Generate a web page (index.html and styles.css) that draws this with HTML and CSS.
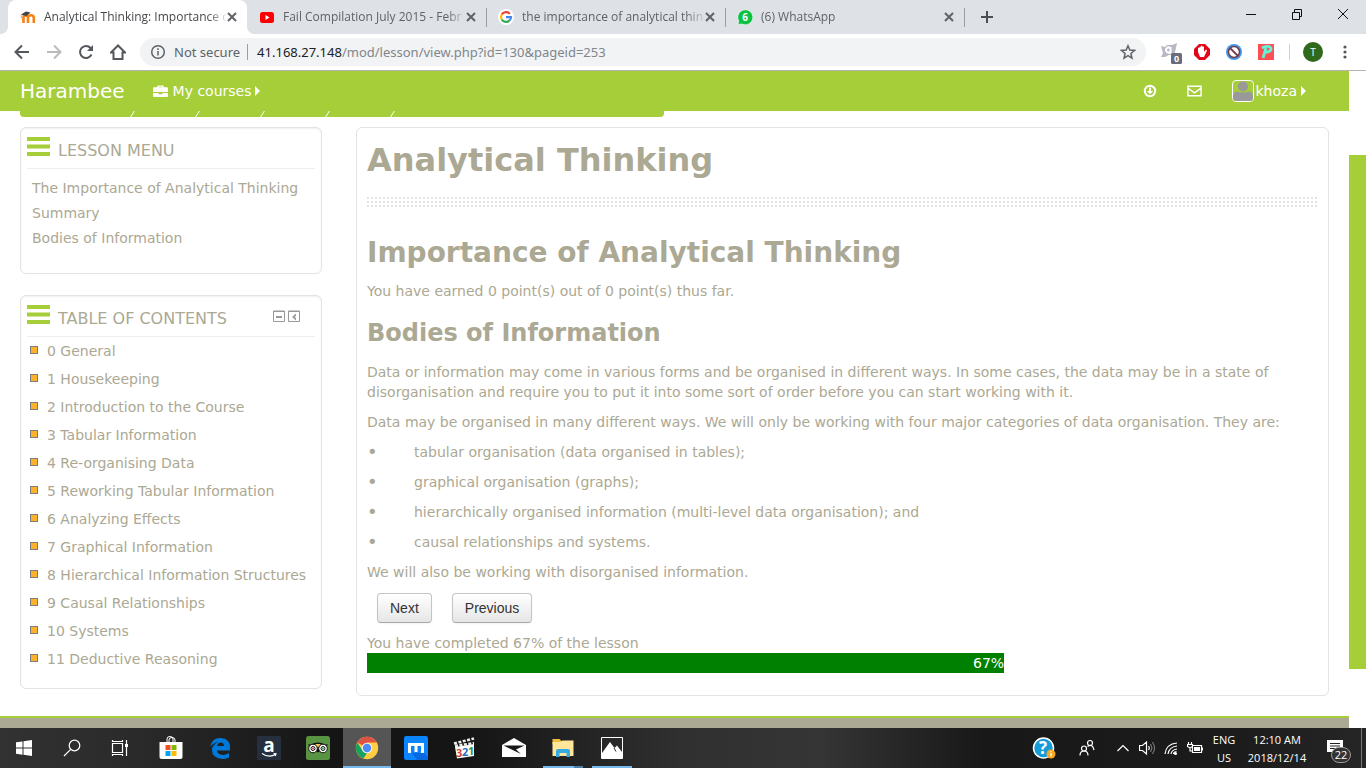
FILE: index.html
```html
<!DOCTYPE html>
<html lang="en">
<head>
<meta charset="utf-8">
<title>Analytical Thinking: Importance of Analytical Thinking</title>
<link rel="stylesheet" href="styles.css">
</head>
<body>
<header class="browser">
  <div class="tabstrip">
    <div class="tab tab-active">
      <svg class="favicon" viewBox="0 0 16 16"><path d="M3.500 14V8.600c0-3 4.500-3 4.500 0V14M8 8.600c0-3.200 5.800-3.200 5.800 0V14" fill="none" stroke="#f98012" stroke-width="2.600"/><path d="M1 5.500 6 2.500l4.500 1-4 3.500z" fill="#444"/><path d="M1.300 5.500v4" stroke="#888" stroke-width=".6"/></svg>
      <span class="tab-title">Analytical Thinking: Importance o</span>
      <button class="tab-close" aria-label="Close tab"><svg viewBox="0 0 10 10"><path d="M1 1l8 8M9 1L1 9"/></svg></button>
    </div>
    <div class="tab">
      <svg class="favicon" viewBox="0 0 16 16"><rect x="1" y="3" width="14" height="11" rx="2.500" fill="#f00"/><path d="M6.500 6v5l4-2.500z" fill="#fff"/></svg>
      <span class="tab-title">Fail Compilation July 2015 - Febr</span>
      <button class="tab-close" aria-label="Close tab"><svg viewBox="0 0 10 10"><path d="M1 1l8 8M9 1L1 9"/></svg></button>
    </div>
    <div class="tab">
      <svg class="favicon" viewBox="0 0 16 16"><circle cx="8" cy="8" r="8" fill="#fff"/><g fill="none" stroke-width="2.200"><path d="M11.800 4.800A5 5 0 0 0 3.700 5.500" stroke="#ea4335"/><path d="M3.700 5.500a5 5 0 0 0 0 5" stroke="#fbbc05"/><path d="M3.700 10.500a5 5 0 0 0 7.800 1" stroke="#34a853"/><path d="M11.500 11.500A5 5 0 0 0 13 8.200H8" stroke="#4285f4"/></g></svg>
      <span class="tab-title">the importance of analytical think</span>
      <button class="tab-close" aria-label="Close tab"><svg viewBox="0 0 10 10"><path d="M1 1l8 8M9 1L1 9"/></svg></button>
    </div>
    <div class="tab">
      <svg class="favicon" viewBox="0 0 16 16"><path d="M1 15.500 1.800 12A7.500 7.500 0 1 1 5 15z" fill="#0dc143" stroke="#fff" stroke-width=".6"/><text x="8" y="12" class="badge-six">6</text></svg>
      <span class="tab-title">(6) WhatsApp</span>
      <button class="tab-close" aria-label="Close tab"><svg viewBox="0 0 10 10"><path d="M1 1l8 8M9 1L1 9"/></svg></button>
    </div>
    <button class="new-tab" aria-label="New tab"><svg viewBox="0 0 12 12"><path d="M6 0v12M0 6h12"/></svg></button>
    <div class="window-controls">
      <button aria-label="Minimize"><svg viewBox="0 0 12 12"><path d="M1 6.500h10"/></svg></button>
      <button aria-label="Restore"><svg viewBox="0 0 12 12"><path d="M1.500 4.500h7v7h-7zM3.500 4.500v-3h7v7h-2"/></svg></button>
      <button aria-label="Close"><svg viewBox="0 0 12 12"><path d="M1 1l10 10M11 1L1 11"/></svg></button>
    </div>
  </div>
  <div class="toolbar">
    <div class="tool-group">
      <button aria-label="Back"><svg viewBox="0 0 16 16"><path d="M15 8H2M8 1.500 1.500 8 8 14.500"/></svg></button>
      <button class="disabled" aria-label="Forward"><svg viewBox="0 0 16 16"><path d="M1 8h13M8 1.500 14.500 8 8 14.500"/></svg></button>
      <button aria-label="Reload"><svg viewBox="0 0 16 16"><path d="M13.500 10.500A6 6 0 1 1 12.500 4L14 5.500"/><path d="M15 1v6H9z" class="solid"/></svg></button>
      <button aria-label="Home"><svg viewBox="0 0 16 16"><path d="M1 8.500 8 1.500l7 7h-2.500V15h-9V8.500z"/></svg></button>
    </div>
    <div class="omnibox">
      <svg class="info" viewBox="0 0 16 16"><circle cx="8" cy="8" r="6.300"/><path d="M8 7v4.500M8 4.300v1.600"/></svg>
      <span class="secure">Not secure</span>
      <div class="url" role="textbox" aria-label="Address"><b>41.168.27.148</b>/mod/lesson/view.php?id=130&amp;pageid=253</div>
      <button class="star" aria-label="Bookmark"><svg viewBox="0 0 16 16"><path d="M8 1.800l1.800 4.300 4.700.4-3.600 3 1.100 4.600L8 11.700l-4 2.400 1.100-4.600-3.600-3 4.700-.4z"/></svg></button>
    </div>
    <div class="tool-group">
      <button aria-label="Extension" class="ext"><svg viewBox="0 0 24 24"><path d="M3 6l4 1 2-2h5l5-2-1 5-1 4v3h-6l-4 2H3l2-4z" fill="#b9b9c6"/><path d="M12 8a2.500 2.500 0 1 0 0 4M12.500 7v7" fill="none" stroke="#fff"/><rect x="13" y="13" width="11" height="11" rx="1.500" fill="#6b6c7b"/><text x="18.500" y="22" class="ext-zero">0</text></svg></button>
      <button aria-label="Blocker" class="ext"><svg viewBox="0 0 24 24"><path d="M9 4h6l5 5v6l-5 5H9l-5-5V9z" fill="#e2061a"/><path d="M8 12V8q1-1 1.500 0V7q1-1 1.500 0V6q1-1 1.500 0v1q1-1 1.500 0v5l1.500-2q1.500-.5 1.500.5L14 17H10z" fill="#fff"/></svg></button>
      <button aria-label="Block content" class="ext"><svg viewBox="0 0 24 24"><circle cx="12" cy="12" r="8" fill="#4099f0"/><circle cx="12" cy="12" r="5.500" fill="#fff" stroke="#743b46" stroke-width="1.500"/><path d="M8 8l8 8" stroke="#743b46" stroke-width="1.800"/></svg></button>
      <button aria-label="P extension" class="ext"><svg viewBox="0 0 24 24"><path d="M4 4h16v16H4z" fill="#ff4f55"/><path d="M9 18l3-10M8 8q3-2 7-1.500 3 1 1.500 4-2 2-6 2" fill="none" stroke="#65f3d5" stroke-width="2.800"/></svg></button>
      <span class="tool-divider"></span>
      <button class="profile" aria-label="Profile"><span>T</span></button>
      <button aria-label="Menu"><svg viewBox="0 0 16 16"><g class="solid"><circle cx="8" cy="3" r="1.600"/><circle cx="8" cy="8" r="1.600"/><circle cx="8" cy="13" r="1.600"/></g></svg></button>
    </div>
  </div>
</header>

<div class="viewport">
  <div class="page">
    <nav class="navbar">
      <a class="brand" href="#">Harambee</a>
      <a class="nav-link" href="#"><svg class="briefcase" viewBox="0 0 16 14"><path d="M0 3.500Q0 2.500 1 2.500H4.500V1.500Q4.500.5 5.500.5h5Q11.500.5 11.500 1.500v1H15q1 0 1 1V7.500H0zM6 2v.5h4V2zM0 8.500h6v1.500h4V8.500h6V12q0 1-1 1H1q-1 0-1-1z"/></svg>My courses<svg class="caret" viewBox="0 0 6 10"><path d="M0 0l5 5-5 5z"/></svg></a>
      <div class="nav-right">
        <a href="#" aria-label="Updates"><svg class="nav-icon" viewBox="0 0 14 14"><circle cx="7" cy="7" r="5.200" fill="none" stroke="#fff" stroke-width="2"/><path d="M6 3.500h2V7h2.200L7 10.300 3.800 7H6z"/></svg></a>
        <a href="#" aria-label="Messages"><svg class="mail" viewBox="0 0 16 12"><path d="M1 1h14v10H1zM1 3l7 5 7-5" fill="none" stroke="#fff" stroke-width="1.500"/></svg></a>
        <a class="user" href="#"><svg class="avatar" viewBox="0 0 20 20"><circle cx="10" cy="5.500" r="5"/><path d="M0 20v-5q0-4 4-4.500 6 2 12 0 4 .5 4 4.500v5z"/></svg>khoza<svg class="caret" viewBox="0 0 6 10"><path d="M0 0l5 5-5 5z"/></svg></a>
      </div>
    </nav>
    <div class="breadcrumb"><i></i><i></i><i></i><i></i><i></i></div>
    <div class="columns">
      <aside class="sidebar">
        <section class="card block">
          <div class="block-head"><svg class="bars" viewBox="0 0 23 19"><path d="M0 2h23M0 9.500h23M0 17h23"/></svg><h2>LESSON MENU</h2></div>
          <ul class="menu">
            <li><a href="#">The Importance of Analytical Thinking</a></li>
            <li><a href="#">Summary</a></li>
            <li><a href="#">Bodies of Information</a></li>
          </ul>
        </section>
        <section class="card block">
          <div class="block-head"><svg class="bars" viewBox="0 0 23 19"><path d="M0 2h23M0 9.500h23M0 17h23"/></svg><h2>TABLE OF CONTENTS</h2>
            <div class="block-actions">
              <button aria-label="Hide block"><svg viewBox="0 0 12 12"><path d="M.5 1h11v10.500H.5zM0 1.500h12" fill="none" stroke="#999"/><path d="M3 6h6v2H3z" fill="#999"/></svg></button>
              <button aria-label="Dock block"><svg viewBox="0 0 12 12"><path d="M.5 1h11v10.500H.5zM0 1.500h12" fill="none" stroke="#999"/><path d="M8 3.500 4 7l4 3.500V8L6.500 7 8 6z" fill="#999"/></svg></button>
            </div>
          </div>
          <ul class="toc">
            <li><a href="#">0 General</a></li>
            <li><a href="#">1 Housekeeping</a></li>
            <li><a href="#">2 Introduction to the Course</a></li>
            <li><a href="#">3 Tabular Information</a></li>
            <li><a href="#">4 Re-organising Data</a></li>
            <li><a href="#">5 Reworking Tabular Information</a></li>
            <li><a href="#">6 Analyzing Effects</a></li>
            <li><a href="#">7 Graphical Information</a></li>
            <li><a href="#">8 Hierarchical Information Structures</a></li>
            <li><a href="#">9 Causal Relationships</a></li>
            <li><a href="#">10 Systems</a></li>
            <li><a href="#">11 Deductive Reasoning</a></li>
          </ul>
        </section>
      </aside>
      <main class="card lesson">
        <h1>Analytical Thinking</h1>
        <div class="dots"></div>
        <h2>Importance of Analytical Thinking</h2>
        <p>You have earned 0 point(s) out of 0 point(s) thus far.</p>
        <h3>Bodies of Information</h3>
        <p>Data or information may come in various forms and be organised in different ways. In some cases, the data may be in a state of disorganisation and require you to put it into some sort of order before you can start working with it.</p>
        <p>Data may be organised in many different ways. We will only be working with four major categories of data organisation. They are:</p>
        <ul class="points">
          <li><span>•</span>tabular organisation (data organised in tables);</li>
          <li><span>•</span>graphical organisation (graphs);</li>
          <li><span>•</span>hierarchically organised information (multi-level data organisation); and</li>
          <li><span>•</span>causal relationships and systems.</li>
        </ul>
        <p>We will also be working with disorganised information.</p>
        <div class="actions"><button>Next</button><button>Previous</button></div>
        <div class="progress-label">You have completed 67% of the lesson</div>
        <div class="progress"><div class="progress-fill" style="width:67%">67%</div></div>
      </main>
    </div>
    <footer class="footer"></footer>
  </div>
  <div class="scrollbar"><div class="thumb"></div></div>
</div>

<div class="taskbar">
  <div class="system">
    <button aria-label="Start"><svg viewBox="0 0 24 24"><path d="M4 6.300 10.500 5.400V11.500H4zM11.500 5.200 20 4v7.500h-8.500zM4 12.500h6.500v6.200L4 17.800zM11.500 12.500H20V20l-8.500-1.200z" fill="#fff"/></svg></button>
    <button aria-label="Search"><svg viewBox="0 0 24 24"><circle cx="14.500" cy="9.500" r="5.300" class="line"/><path d="M10.700 13.300 4 20" class="line"/></svg></button>
    <button aria-label="Task view"><svg viewBox="0 0 24 24"><path d="M4.500 7.500h10v9h-10zM4.500 4v1.500h10V4M4.500 20v-1.500h10V20M18.500 4v16" class="line"/><path d="M17 8h3v3h-3z" fill="#fff"/></svg></button>
  </div>
  <div class="apps">
    <button aria-label="Store"><svg viewBox="0 0 24 24"><path d="M8 6V3q0-2.500 3-2.500T14 3v3M10 6V4q0-2.500 3-2.500T16 4v2" fill="none" stroke="#fff"/><path d="M.5 6h23v15q0 2-2 2h-19q-2 0-2-2z" fill="#fff"/><path d="M6.500 9h5v5h-5z" fill="#f25022"/><path d="M12.500 9h5v5h-5z" fill="#7fba00"/><path d="M6.500 15h5v5h-5z" fill="#00a4ef"/><path d="M12.500 15h5v5h-5z" fill="#ffb900"/></svg></button>
    <button aria-label="Edge"><svg viewBox="0 0 24 24"><path d="M2 11Q4 1.500 13 2q9 .5 9 9.500v3H9q.5 4 6 4.500 3 0 6-2v4.500Q18 23 14 23 4 22 4 14q0-5 6-8-5 1-8 5zm7-1h7q0-3.500-3.300-3.500Q10 6.500 9 10z" fill="#0078d7"/></svg></button>
    <button aria-label="Amazon"><svg viewBox="0 0 24 24"><rect width="24" height="24" rx="1.500" fill="#262f3d"/><text x="12" y="16" class="amazon">a</text><path d="M5 17.500q7 5 14 .5M16.500 17.500l2.500.3-.8 2.200" fill="none" stroke="#fff" stroke-width="1.200"/></svg></button>
    <button aria-label="TripAdvisor"><svg viewBox="0 0 24 24"><rect width="24" height="24" rx="2.500" fill="#589442"/><path d="M2 8.500h3q7-4 14 0h3l-2 3-8 5-8-5z" fill="#111"/><path d="M9 8h6l-3 4z" fill="#f5c65a"/><g fill="#fff" stroke="#111"><circle cx="7" cy="12.500" r="4.300"/><circle cx="17" cy="12.500" r="4.300"/><circle cx="7" cy="12.500" r="2"/><circle cx="17" cy="12.500" r="2"/></g><circle cx="7" cy="12.500" r="1" fill="#e33"/><circle cx="17" cy="12.500" r="1" fill="#393"/></svg></button>
    <button aria-label="Chrome" class="current"><svg viewBox="0 0 24 24"><circle cx="12" cy="12" r="11.200" fill="#ffcd42"/><path d="M12 12 2.300 6.400A11.200 11.200 0 0 1 21.700 6.400H12z" fill="#de5246"/><path d="M2.300 6.400 7.500 14.500l4.500 2.500-3.500 5.600A11.200 11.200 0 0 1 2.300 6.400z" fill="#1aa15f"/><circle cx="12" cy="12" r="5.300" fill="#f1f1f1"/><circle cx="12" cy="12" r="4.200" fill="#4c8bf5"/></svg></button>
    <button aria-label="Maxthon"><svg viewBox="0 0 24 24"><rect width="24" height="24" rx="2" fill="#0a84ff"/><path d="M20 17l4 4v3H13l-5-7z" fill="#0868df"/><path d="M4 7h16v10h-3v-7h-3.500v6h-3v-6H7v7H4z" fill="#fff"/></svg></button>
    <button aria-label="Media player"><svg viewBox="0 0 24 24"><path d="M2 11 21 8v12L4 22.500z" fill="#fff"/><path d="M1 7.500 21 2.500M2 10l19-3" fill="none" stroke="#eee" stroke-width="2.500" stroke-dasharray="3 1.500"/><g class="digits"><text x="3" y="21" fill="#d2452b">3</text><text x="9" y="20" fill="#2671c5">2</text><text x="15" y="19" fill="#2b9344">1</text></g></svg></button>
    <button aria-label="Mail"><svg viewBox="0 0 24 24"><path d="M0 9 12 2l12 7v12H0z" fill="#fff"/><path d="M1.500 9.500h21L14 13.500l5 4.500z" fill="#171717"/></svg></button>
    <button aria-label="File Explorer" class="running stacked"><svg viewBox="0 0 24 24"><path d="M1.500 3h7l2 2H21v3H1.500z" fill="#f3be3d"/><path d="M1.500 6h8l2-1.500h11V20h-21z" fill="#ffe69a"/><path d="M5 21v-6q0-2 2-2h10q2 0 2 2v6h-3.500v-4h-7v4z" fill="#35abe2"/></svg></button>
    <button aria-label="Photos" class="running"><svg viewBox="0 0 24 24"><path d="M1.500 1.500h21v21h-21z" fill="#292929" stroke="#fff"/><path d="M2 17l8-11 4.500 6L17 9.500l5 6.500v6H2z" fill="#fff"/><path d="M14 12l2 3.500" stroke="#292929"/></svg></button>
  </div>
  <div class="tray">
    <button class="help" aria-label="Help"><svg viewBox="0 0 24 24"><circle cx="11.500" cy="12" r="10" fill="#159bd7" stroke="#fff" stroke-width="1.500"/><text x="11" y="18" class="question">?</text><circle cx="19" cy="18" r="4.500" fill="#f7a823"/><path d="M19 17v3.500M19 15v1.200" stroke="#fff" stroke-width="1.200"/></svg></button>
    <button class="people" aria-label="People"><svg viewBox="0 0 18 18"><g class="line"><circle cx="6" cy="9.500" r="2.500"/><path d="M2 16.500q0-4.500 4-4.500t4 4.500"/><circle cx="12" cy="4" r="2.500"/><path d="M9.500 7.500q5-3.500 6.500 3.500"/></g></svg></button>
    <button class="tiny" aria-label="Show hidden icons"><svg viewBox="0 0 16 16"><path d="M2.500 11 8 5.500l5.500 5.500" class="line"/></svg></button>
    <button class="tiny" aria-label="Volume"><svg viewBox="0 0 16 16"><path d="M.5 5.500h3l4-3.500v12l-4-3.500h-3zM9.500 6q1.500 2 0 4" class="line"/><path d="M11.500 4q3 4 0 8M13.500 2q4 6 0 12" fill="none" stroke="#888"/></svg></button>
    <button class="tiny" aria-label="Network"><svg viewBox="0 0 16 16"><path d="M2 14Q3 4 14 3M5 14q1-7 9-8M8 14q.5-4 6-5M10.500 14q0-2 3-2.500" class="line"/><circle cx="12.500" cy="13.500" r="1.500" fill="#fff"/></svg></button>
    <button class="tiny" aria-label="Battery"><svg viewBox="0 0 16 16"><path d="M5.500 5.500h9v7h-9zM15.500 7.500v3M1.500 2v2M4.500 2v2M.5 4.500h5v2q-2.500 2-5 0zM3 8v3h2" class="line"/><path d="M7 7h6v4H7z" fill="#fff"/></svg></button>
    <div class="language"><span>ENG</span><span>US</span></div>
    <div class="clock"><span>12:10 AM</span><span>2018/12/14</span></div>
    <button class="notices" aria-label="Notifications"><svg viewBox="0 0 16 16"><path d="M0 0h16v12H8l-3 3v-3H0z" fill="#fff"/><path d="M3 3.500h10M3 6h10M3 8.500h8" stroke="#222"/></svg><span class="count">22</span></button>
  </div>
</div>
</body>
</html>
```
FILE: styles.css
```css
:root {
  --green: #a6ce39;
  --ink: #aba893;
  --line: #e3e3e3;
}

*, *::before, *::after { box-sizing: border-box; }

body {
  margin: 0;
  height: 100vh;
  display: flex;
  flex-direction: column;
  overflow: hidden;
  background: #fff;
  color: var(--ink);
  font: 14px/20px "DejaVu Sans", Verdana, sans-serif;
}

a { color: inherit; text-decoration: none; }
button { margin: 0; padding: 0; border: 0; background: none; color: inherit; font: inherit; }
h1, h2, h3, p, ul { margin: 0; padding: 0; }
ul { list-style: none; }
svg { display: block; flex: none; }

/* Browser frame */
.browser {
  flex: none;
  border-bottom: 1px solid #b4b4b4;
  color: #5f6368;
  font-family: "Open Sans", "Noto Sans", sans-serif;
}
.tabstrip { display: flex; height: 34px; padding-left: 8px; background: #dee1e6; }
.tab {
  display: flex;
  align-items: center;
  width: 239px;
  padding: 0 9px 0 12px;
  font-size: 12px;
  position: relative;
}
.tab::after { content: ""; position: absolute; right: -1px; top: 8px; width: 1px; height: 19px; background: #9a9da1; }
.tab-active { background: #fff; border-radius: 8px 8px 0 0; color: #45484c; }
.tab-active::before,
.tab-active::after {
  content: "";
  position: absolute;
  top: auto;
  bottom: 0;
  width: 8px;
  height: 8px;
}
.tab-active::before { left: -8px; background: radial-gradient(circle at 0 0, #dee1e6 8px, #fff 8px); }
.tab-active::after { right: -8px; background: radial-gradient(circle at 100% 0, #dee1e6 8px, #fff 8px); }
.favicon { width: 16px; height: 16px; }
.tab-title {
  flex: 1;
  min-width: 0;
  margin-left: 8px;
  white-space: nowrap;
  -webkit-mask-image: linear-gradient(to right, #000 90%, #0002);
  mask-image: linear-gradient(to right, #000 90%, #0002);
}
.tab-close { width: 12px; }
.tab-close svg { width: 10px; height: 10px; margin: auto; fill: none; stroke: #5f6368; stroke-width: 2; }
.badge-six { font: bold 10px "Open Sans", sans-serif; fill: #fff; text-anchor: middle; }
.new-tab { width: 46px; }
.new-tab svg { width: 12px; height: 12px; margin: auto; stroke: #4a4d51; stroke-width: 2; }
.window-controls { display: flex; margin-left: auto; height: 28px; }
.window-controls button { width: 46px; }
.window-controls svg { width: 12px; height: 12px; margin: auto; fill: none; stroke: #111; }

.toolbar { display: flex; align-items: center; height: 36px; padding: 0 5px 0 6px; background: #fff; }
.tool-group { display: flex; align-items: center; }
.tool-group button { width: 32px; height: 28px; display: grid; place-items: center; }
.tool-group svg { width: 16px; height: 16px; fill: none; stroke: #54575b; stroke-width: 2; }
.tool-group .solid { fill: #54575b; stroke: none; }
.tool-group .disabled svg { stroke: #b9bbbd; }
.tool-group .ext svg { width: 24px; height: 24px; stroke: none; }
.ext-zero { font: bold 9px "Open Sans", sans-serif; fill: #fff; text-anchor: middle; }
.omnibox {
  flex: 1;
  display: flex;
  align-items: center;
  height: 28px;
  margin: 0 8px 0 6px;
  padding: 0 10px;
  border-radius: 14px;
  background: #f1f3f4;
  font-family: "Noto Sans", "Open Sans", sans-serif;
  font-size: 13px;
}
.omnibox svg { width: 16px; height: 16px; fill: none; stroke: #5f6368; stroke-width: 1.500; }
.secure { margin-left: 8px; padding-right: 7px; }
.url { flex: 1; padding-left: 9px; border-left: 1px solid #9a9da1; line-height: 16px; color: #80868b; }
.url b { font-weight: 400; color: #202124; }
.tool-divider { width: 1px; height: 16px; margin: 0 7px; background: #cfd1d4; }
.profile span { width: 20px; height: 20px; border-radius: 50%; background: #2f691c; color: #fff; font-size: 10px; line-height: 20px; text-align: center; }

/* Page */
.viewport { flex: 1; min-height: 0; display: flex; }
.page { flex: 1; min-width: 0; display: flex; flex-direction: column; }
.scrollbar { width: 17px; padding-top: 84px; background: #fff; }
.thumb { height: 514px; background: var(--green); }

.navbar { flex: none; display: flex; align-items: center; height: 40px; padding: 0 42px 0 20px; background: var(--green); color: #fff; fill: #fff; }
.brand { font-size: 20px; }
.nav-link { display: flex; align-items: center; margin-left: 28px; }
.briefcase { width: 15px; height: 13px; margin-right: 5px; }
.caret { width: 6px; height: 10px; margin-left: 4px; }
.nav-right { display: flex; align-items: center; gap: 30px; margin-left: auto; }
.nav-icon { width: 14px; height: 14px; }
.mail { width: 15px; height: 12px; }
.user { display: flex; align-items: center; }
.avatar { width: 22px; height: 22px; margin-right: 2px; border: 1px solid #fff; border-radius: 4px; fill: #999; }

.breadcrumb { flex: none; display: flex; justify-content: flex-start; gap: 64px; width: 644px; height: 6px; margin-left: 20px; padding-left: 112px; border-radius: 0 0 4px 4px; background: var(--green); }
.breadcrumb i { width: 1px; background: #fff; transform: skewX(-32deg); }

.columns { flex: none; display: grid; grid-template-columns: 302px 1fr; align-items: start; gap: 34px; padding: 10px 20px 20px; }
.card { border: 1px solid var(--line); border-radius: 6px; }
.sidebar { display: grid; gap: 21px; }
.block { padding: 0 6px 15px; box-shadow: inset 0 1px 2px #f1f1f1; }
.block-head { display: flex; align-items: center; height: 41px; border-bottom: 1px solid #eee; }
.bars { width: 23px; height: 19px; margin: 0 8px 4px 0; stroke: var(--green); stroke-width: 4; }
.block-head h2 { padding-top: 6px; font-size: 16px; font-weight: 400; }
.block-actions { display: flex; gap: 3px; margin-left: auto; padding-right: 15px; }
.block-actions svg { width: 12px; height: 12px; }
.menu { padding: 7px 5px; line-height: 25px; }
.toc { line-height: 28px; }
.toc li { display: flex; align-items: center; margin-left: 3px; white-space: nowrap; }
.toc li::before { content: ""; width: 8px; height: 8px; margin: 0 9px 2px 0; border: 1px solid #7c7c7c; background: #fdb02b; }

.lesson { padding: 10px 10px 22px; }
.lesson h1 { font-size: 32px; line-height: 44px; }
.lesson h2 { margin: 26px 0 8px; font-size: 28px; line-height: 40px; }
.lesson h3 { margin: 12px 0 8px; font-size: 24px; line-height: 41px; }
.dots { height: 10px; margin-top: 15px; background: conic-gradient(from 270deg at 2px 2px, var(--line) 90deg, transparent 0) 0 0 / 4px 4px; }
.lesson p, .points li { margin-bottom: 10px; }
.points li { display: flex; }
.points span { width: 47px; font-size: 18px; }
.actions { display: flex; gap: 20px; padding: 1px 10px 10px; }
.actions button {
  height: 30px;
  padding: 0 12px;
  border: 1px solid #c4c4c4;
  border-bottom-color: #a9a9a9;
  border-radius: 4px;
  background: linear-gradient(#fff, #e6e6e6);
  box-shadow: 0 1px 2px #0000000d;
  color: #333;
  font: 14px/20px "Liberation Sans", Arial, sans-serif;
}
.progress-fill { height: 20px; background: green; color: #fff; text-align: right; }
.footer { flex: 1; border-top: 2px solid var(--green); background: var(--ink); }

/* Taskbar */
.taskbar {
  flex: none;
  display: flex;
  height: 40px;
  background: linear-gradient(to right, #323232, #2a2a2a 10%, #151515 24%, #151515 34%, #303030 50%, #353535 60%, #181818 72%, #1b1b1b 90%, #262626);
  color: #fff;
  font: 11px/17px "Open Sans", "Noto Sans", sans-serif;
}
.taskbar button { display: grid; place-items: center; }
.system, .apps { display: flex; }
.apps { gap: 1px; margin-left: 3px; }
.system button, .apps button { width: 48px; height: 40px; }
.system svg, .apps svg { width: 24px; height: 24px; }
.line { fill: none; stroke: #fff; stroke-width: 1.200; }
.apps .current { background: #555 linear-gradient(#76b9ed, #76b9ed) bottom / 100% 2px no-repeat; }
.apps .running { background: linear-gradient(#76b9ed, #76b9ed) bottom / 40px 2px no-repeat; }
.apps .stacked { background-image: linear-gradient(to right, #76b9ed 31px, #4d7fa8 31px); }
.amazon { font: bold 19px "Open Sans", sans-serif; fill: #fff; text-anchor: middle; }
.digits { font: bold 11px "Open Sans", sans-serif; }
.question { font: bold 17px "Open Sans", sans-serif; fill: #fff; text-anchor: middle; }
.tray { display: flex; align-items: center; margin: 0 4px 0 auto; padding-right: 4px; border-right: 1px solid #777; }
.help svg { width: 24px; height: 24px; }
.people { margin: 0 15px 0 22px; }
.people svg { width: 18px; height: 18px; }
.tiny { width: 24px; }
.tiny svg { width: 16px; height: 16px; }
.language, .clock { display: grid; row-gap: 1px; text-align: center; }
.language { width: 34px; }
.clock { width: 72px; }
.notices { position: relative; width: 44px; height: 40px; }
.notices svg { width: 16px; height: 16px; }
.count { position: absolute; left: 18px; top: 19px; width: 20px; height: 16px; border: 1px solid #999; border-radius: 8px; background: #333; line-height: 14px; text-align: center; }
```
